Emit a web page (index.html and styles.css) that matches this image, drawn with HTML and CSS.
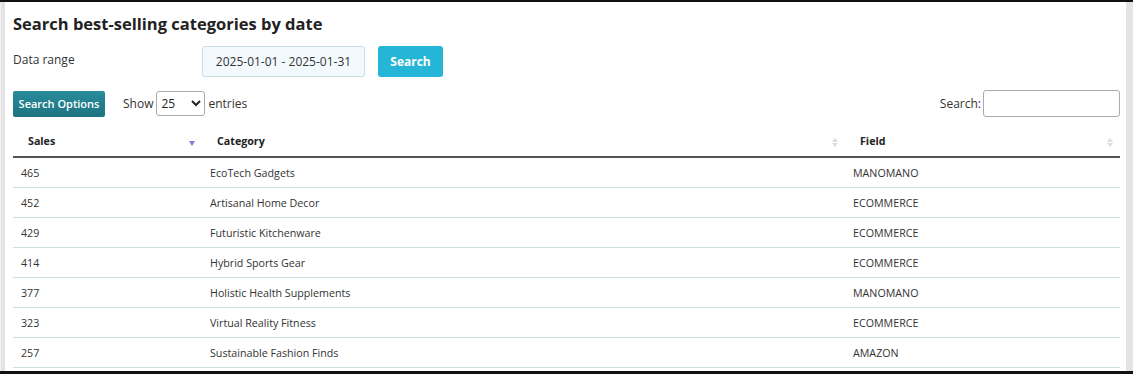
FILE: index.html
```html
<!DOCTYPE html>
<html>
<head>
  <meta charset="UTF-8">
  <title>Best-selling categories</title>
  <link rel="stylesheet" href="styles.css">
</head>
<body>

  <div class="frame">
    <div class="panel">
      <h1 class="title">Search best-selling categories by date</h1>

      <form class="date-form">
        <label class="date-label">Data range</label>
        <input type="text" class="date-input" value="2025-01-01 - 2025-01-31">
        <button type="button" class="btn-search">Search</button>
      </form>

      <div class="table-tools">
        <button type="button" class="btn-options">Search Options</button>
        <div class="length">
          Show
          <select class="length-select">
            <option>25</option>
          </select>
          entries
        </div>
        <div class="filter">
          Search:
          <input type="text" class="filter-input">
        </div>
      </div>

      <table class="data-table">
        <thead>
          <tr>
            <th class="col-sales sorted">Sales <span class="sort-down"></span></th>
            <th class="col-category">Category <span class="sort-both"></span></th>
            <th class="col-field">Field <span class="sort-both"></span></th>
          </tr>
        </thead>
        <tbody>
          <tr><td>465</td><td>EcoTech Gadgets</td><td>MANOMANO</td></tr>
          <tr><td>452</td><td>Artisanal Home Decor</td><td>ECOMMERCE</td></tr>
          <tr><td>429</td><td>Futuristic Kitchenware</td><td>ECOMMERCE</td></tr>
          <tr><td>414</td><td>Hybrid Sports Gear</td><td>ECOMMERCE</td></tr>
          <tr><td>377</td><td>Holistic Health Supplements</td><td>MANOMANO</td></tr>
          <tr><td>323</td><td>Virtual Reality Fitness</td><td>ECOMMERCE</td></tr>
          <tr><td>257</td><td>Sustainable Fashion Finds</td><td>AMAZON</td></tr>
        </tbody>
      </table>
    </div>
  </div>

</body>
</html>
```

FILE: styles.css
```css
html, body {
  margin: 0;
  padding: 0;
  width: 100%;
  height: 100%;
  font-family: "Open Sans", sans-serif;
  background: #111;
  overflow: hidden;
}

.frame {
  margin-top: 2px;
  height: 369px;
  background: #e4e4e4;
  padding: 0 7px 0 4px;
  box-sizing: border-box;
  border-left: 1px solid #f2f2f2;
}

.panel {
  background: #fff;
  height: 100%;
  padding: 0 6px 0 8px;
  box-sizing: border-box;
  overflow: hidden;
  color: #333;
}

.title {
  margin: 0;
  padding-top: 10px;
  font-size: 16.5px;
  font-weight: 700;
  color: #222;
  line-height: 24px;
}

.date-form {
  display: flex;
  align-items: flex-start;
  margin-top: 10px;
  height: 31px;
}

.date-label {
  width: 189px;
  font-size: 12px;
  padding-top: 5px;
}

.date-input {
  width: 163px;
  height: 31px;
  box-sizing: border-box;
  border: 1px solid #c9dde4;
  border-radius: 3px;
  background: #f3fafd;
  font-family: inherit;
  font-size: 12px;
  color: #333;
  text-align: center;
  padding: 0;
}

.btn-search {
  margin-left: 13px;
  width: 65px;
  height: 31px;
  border: none;
  border-radius: 3px;
  background: #25b5d6;
  color: #fff;
  font-family: inherit;
  font-size: 12px;
  font-weight: 700;
  cursor: pointer;
}

.table-tools {
  display: flex;
  align-items: center;
  margin-top: 13px;
  height: 27px;
  font-size: 12px;
}

.btn-options {
  width: 92px;
  height: 26px;
  border: none;
  border-radius: 2px;
  background: linear-gradient(#2a8c9b, #1c7381);
  color: #fff;
  font-family: inherit;
  font-size: 11px;
  font-weight: 600;
  padding: 0;
  cursor: pointer;
}

.length {
  margin-left: 18px;
  display: flex;
  align-items: center;
  gap: 3px;
}

.length-select {
  width: 49px;
  height: 25px;
  border: 1px solid #aaa;
  border-radius: 3px;
  background: #fff;
  font-family: inherit;
  font-size: 12px;
  color: #222;
}

.filter {
  margin-left: auto;
  display: flex;
  align-items: center;
  gap: 2px;
}

.filter-input {
  width: 137px;
  height: 27px;
  box-sizing: border-box;
  border: 1px solid #aaa;
  border-radius: 3px;
}

.data-table {
  width: 1107px;
  margin-top: 9px;
  border-collapse: collapse;
  font-size: 10.7px;
  color: #333;
}

.data-table th {
  position: relative;
  text-align: left;
  font-weight: 700;
  color: #222;
  height: 30px;
  padding: 0 18px 0 15px;
  border-bottom: 2px solid #555;
}

.col-sales { width: 189px; box-sizing: border-box; }
.col-field { width: 275px; box-sizing: border-box; }

.data-table td {
  height: 29px;
  padding: 0 8px;
  border-bottom: 1px solid #cfe0e4;
}

.sort-down,
.sort-both {
  position: absolute;
  right: 7px;
  top: 12px;
}

.sort-down {
  width: 0;
  height: 0;
  border-left: 3px solid transparent;
  border-right: 3px solid transparent;
  border-top: 5px solid #7b7fe0;
  top: 15px;
}

.sort-both::before,
.sort-both::after {
  content: "";
  display: block;
  width: 0;
  height: 0;
  border-left: 3px solid transparent;
  border-right: 3px solid transparent;
}

.sort-both::before {
  border-bottom: 4px solid #ddd;
  margin-bottom: 1px;
}

.sort-both::after {
  border-top: 4px solid #ddd;
}
```
